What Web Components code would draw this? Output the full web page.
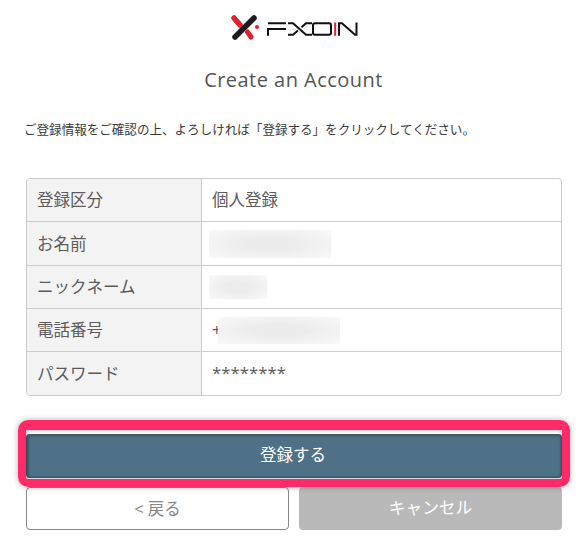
<!DOCTYPE html>
<html lang="ja">
<head>
<meta charset="utf-8">
<style>
  html, body { margin: 0; padding: 0; background: #fff; }
  body { font-family: "Open Sans", "Noto Sans CJK JP", sans-serif; color: #444; }
</style>
</head>
<body>
<signup-confirm>
  <fxon-logo></fxon-logo>
  <h-title>Create an Account</h-title>
  <p-note>ご登録情報をご確認の上、よろしければ「登録する」をクリックしてください。</p-note>
  <info-table>
    <info-row label="登録区分" h="42">個人登録</info-row>
    <info-row label="お名前" h="43"><blur-box w="122" h="28" dx="-3"></blur-box></info-row>
    <info-row label="ニックネーム" h="42"><blur-box w="58" h="24" dx="-3"></blur-box></info-row>
    <info-row label="電話番号" h="42">+<blur-box w="122" h="27" dx="-3"></blur-box></info-row>
    <info-row label="パスワード" h="43" last><span style="font-size:16.8px">********</span></info-row>
  </info-table>
  <action-bar>
    <main-btn>登録する</main-btn>
    <div-row>
      <sub-btn>&lt; 戻る</sub-btn>
      <sub-btn disabled>キャンセル</sub-btn>
    </div-row>
  </action-bar>
</signup-confirm>
<script>
function simple(name, css, html) {
    customElements.define(name, class extends HTMLElement {
        constructor() {
            super();
            this.attachShadow({ mode: 'open' });
            this.shadowRoot.innerHTML = `<style>${css}</style>${html || '<slot></slot>'}`;
        }
    });
}

simple('signup-confirm', `:host { display: block; width: 580px; height: 547px; overflow: hidden; }`);

simple('fxon-logo', `
    :host { display: block; padding: 14px 0 0 226px; height: 28px; }
    svg { display: block; }
`, `
    <svg width="134" height="28" viewBox="0 0 134 28">
        <!-- mark -->
        <path d="M8 4 L14 11" stroke="#e0202c" stroke-width="5.5" stroke-linecap="round"/>
        <path d="M28 4 L9 23" stroke="#1c1c1c" stroke-width="5.5" stroke-linecap="round"/>
        <path d="M21.5 18 L25 23" stroke="#e0202c" stroke-width="5" stroke-linecap="round"/>
        <circle cx="31" cy="13" r="2" fill="#e0202c"/>
        <!-- wordmark -->
        <g fill="none" stroke="#111" stroke-width="2">
            <path d="M42 21.8 V15 H60 M42 9.2 H60"/>
            <path d="M62 9.2 H67 L80 20.8 H86 M62 20.8 H67 L72 16.4 M75.5 13.2 L80 9.2 H86"/>
            <path d="M89 9.2 H103 Q105 9.2 105 11 V19 Q105 20.8 103 20.8 H89 Q87 20.8 87 19 V11 Q87 9.2 89 9.2 Z"/>
            <path d="M109.2 8.5 V21.8" stroke="#e0202c"/>
            <path d="M113 21.8 V9.2 H116 L129 20.8 H130.5 V8.5"/>
        </g>
    </svg>
`);

simple('h-title', `
    :host { display: block; text-align: center; font-size: 20px; line-height: 28px; margin: 24px 0 0 7px; color: #555; letter-spacing: .47px; }
`);

simple('p-note', `
    :host { display: block; font-size: 12.55px; line-height: 18px; margin: 27px 0 0 24px; color: #3a3a3a; white-space: nowrap; }
`);

simple('info-table', `
    :host { display: block; margin: 39px 18px 0 26px; border: 1px solid #ccc; border-radius: 4px; overflow: hidden; }
`);

customElements.define('info-row', class extends HTMLElement {
    constructor() {
        super();
        this.attachShadow({ mode: 'open' });
        const label = this.getAttribute('label');
        const h = this.getAttribute('h');
        const last = this.hasAttribute('last');
        this.shadowRoot.innerHTML = `
            <style>
                :host { display: grid; grid-template-columns: 175px 1fr; height: ${h}px; border-bottom: ${last ? 0 : 1}px solid #ccc; font-size: 16.5px; color: #5c5c5c; }
                .k { background: #f3f3f3; border-right: 1px solid #ccc; padding: 0 0 2px 10px; display: flex; align-items: center; }
                .v { padding: 0 0 2px 10px; display: flex; align-items: center; }
            </style>
            <div class="k">${label}</div>
            <div class="v"><slot></slot></div>
        `;
    }
});

customElements.define('blur-box', class extends HTMLElement {
    constructor() {
        super();
        this.attachShadow({ mode: 'open' });
        const w = this.getAttribute('w');
        const h = this.getAttribute('h');
        const dx = this.getAttribute('dx');
        this.shadowRoot.innerHTML = `
            <style>
                :host { display: block; width: ${w}px; height: ${h}px; margin: 2px 0 0 ${dx}px; background: #f7f7f7; overflow: hidden; }
                div { width: 100%; height: 100%; background: radial-gradient(ellipse at center, #ececec 30%, #f9f9f9 100%); }
            </style>
            <div></div>
        `;
    }
});

simple('action-bar', `
    :host { display: block; margin: 38px 18px 0 26px; }
`);

simple('main-btn', `
    :host { display: block; position: relative; height: 44px; line-height: 42px; padding-right: 2px; text-align: center; font-size: 16.5px; color: #fff; background: #4f7188; border-radius: 4px; box-shadow: inset 2px 2px 3px rgba(0,0,0,.25), inset -1px -1px 2px rgba(0,0,0,.2); }
    .mark { position: absolute; left: -8px; right: -8px; top: -14px; bottom: -9px; border: 8px solid #ff2a68; border-top-width: 10px; border-radius: 10px; box-shadow: 0 0 6px rgba(0,0,0,.3), inset 0 0 4px rgba(0,0,0,.35); }
`, `<slot></slot><div class="mark"></div>`);

simple('div-row', `
    :host { display: grid; grid-template-columns: 263px 263px; gap: 10px; margin-top: 9px; }
`);

customElements.define('sub-btn', class extends HTMLElement {
    constructor() {
        super();
        this.attachShadow({ mode: 'open' });
        const off = this.hasAttribute('disabled');
        this.shadowRoot.innerHTML = `
            <style>
                :host { display: block; height: ${off ? 43 : 41}px; line-height: ${off ? 42 : 41}px; padding-right: ${off ? 0 : 0}px; text-align: center; font-size: ${off ? 16.7 : 16.5}px; border-radius: 4px;
                    color: ${off ? '#fff' : '#888'}; background: ${off ? '#b9b9b9' : '#fff'}; border: ${off ? 'none' : '1px solid #888'}; }
            </style>
            <slot></slot>
        `;
    }
});
</script>
</body>
</html>
